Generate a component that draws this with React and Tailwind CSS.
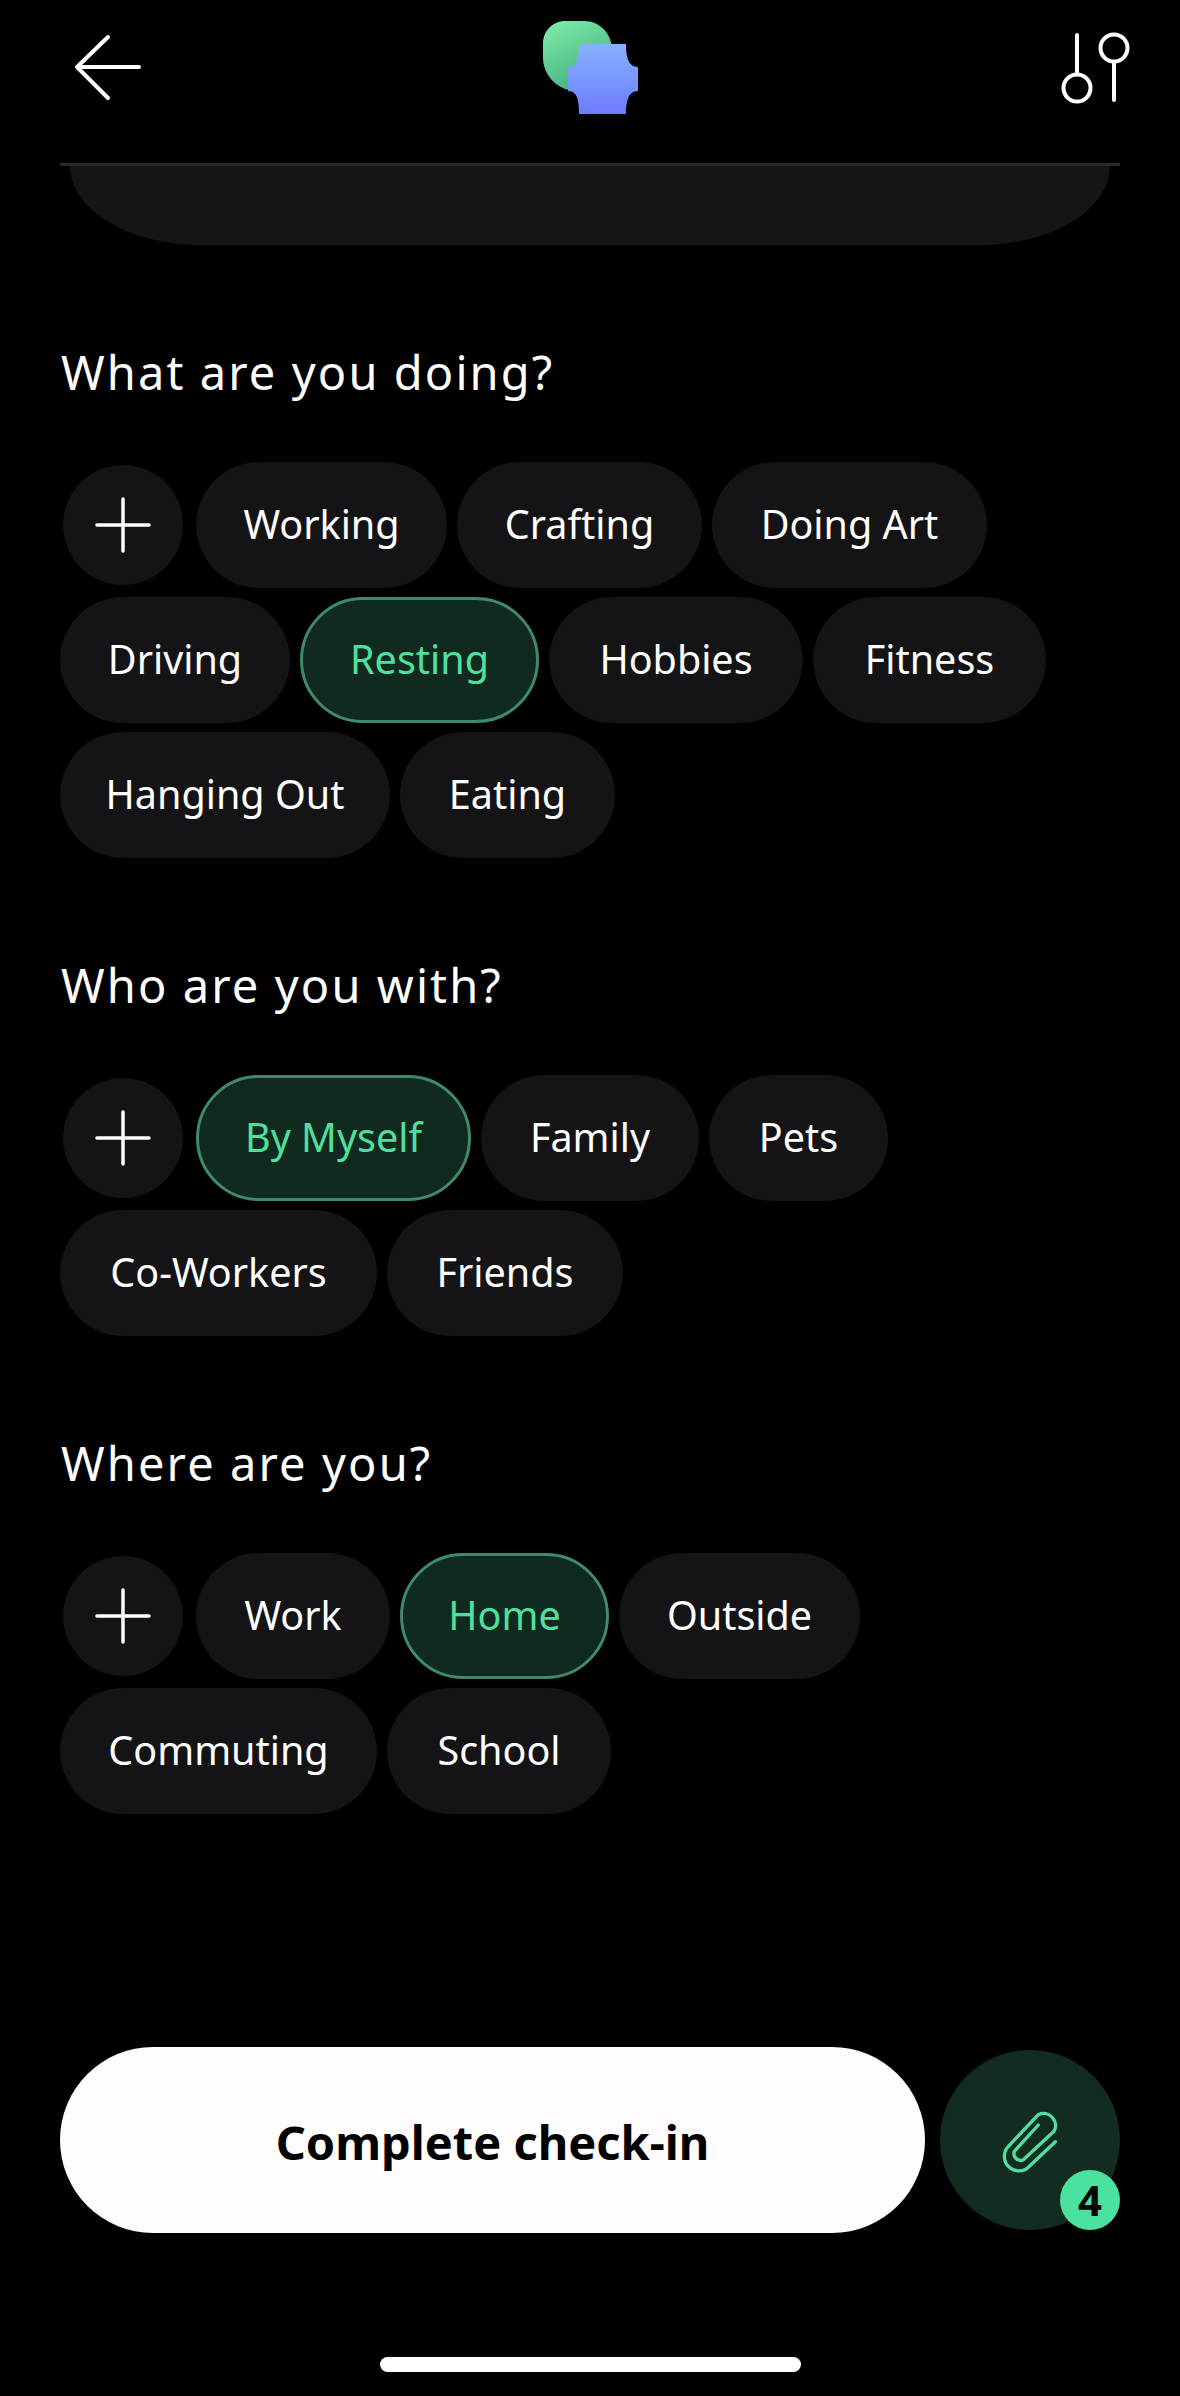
import React from "react";

const groups = [
  {
    title: "What are you doing?",
    rows: [
      [["Working", "w-[251px]"], ["Crafting", "w-[245px]"], ["Doing Art", "w-[275px]"]],
      [["Driving", "w-[230px]"], ["Resting", "w-[239px]", true], ["Hobbies", "w-[254px]"], ["Fitness", "w-[233px]"]],
      [["Hanging Out", "w-[330px]"], ["Eating", "w-[215px]"]],
    ],
  },
  {
    title: "Who are you with?",
    rows: [
      [["By Myself", "w-[275px]", true], ["Family", "w-[218px]"], ["Pets", "w-[179px]"]],
      [["Co-Workers", "w-[317px]"], ["Friends", "w-[236px]"]],
    ],
  },
  {
    title: "Where are you?",
    rows: [
      [["Work", "w-[194px]"], ["Home", "w-[209px]", true], ["Outside", "w-[241px]"]],
      [["Commuting", "w-[317px]"], ["School", "w-[224px]"]],
    ],
  },
];

function Pill({ label, width, on }) {
  return (
    <div
      className={`${width} h-[126px] rounded-full flex items-center justify-center text-[39.5px] leading-none whitespace-nowrap ${
        on ? "bg-[#112a1f] border-[3px] border-[#3f8a68] text-[#4fe0a0]" : "bg-[#141416] text-white"
      }`}
    >
      {label}
    </div>
  );
}

function Plus() {
  return (
    <div className="w-[120px] h-[120px] m-[3px] rounded-full bg-[#141416] flex items-center justify-center">
      <svg width="56" height="56" viewBox="0 0 56 56" fill="none" stroke="#fff" strokeWidth="3.5" strokeLinecap="round">
        <path d="M28 2V54M2 28H54" />
      </svg>
    </div>
  );
}

export default function App() {
  return (
    <div className="w-[1180px] h-[2396px] bg-black overflow-hidden" style={{ fontFamily: '"Noto Sans", sans-serif' }}>
      <header className="h-[163px] px-[50px] pt-[18px] flex justify-between items-start">
        <svg width="100" height="100" viewBox="50 18 100 100" fill="none" stroke="#fff" strokeWidth="4" strokeLinecap="round" strokeLinejoin="round">
          <path d="M108 37L77 67L108 98M77 67H139" />
        </svg>
        <svg width="100" height="100" viewBox="540 18 100 100">
          <defs>
            <linearGradient id="gr" x1="0.2" y1="0" x2="0.7" y2="1">
              <stop offset="0" stopColor="#7ce9a8" />
              <stop offset="1" stopColor="#3fae7c" />
            </linearGradient>
            <linearGradient id="bl" x1="0" y1="0" x2="0" y2="1">
              <stop offset="0" stopColor="#86b1ff" />
              <stop offset="1" stopColor="#6e7cff" />
            </linearGradient>
          </defs>
          <path d="M565 21H584C600 21 612 34 612 50V90H570C555 88 543 73 543 58V43C543 31 553 21 565 21Z" fill="url(#gr)" />
          <path d="M579 44H626C626 56 628 67 638 67V91C628 91 626 102 626 114H579C579 102 578 91 568 91V67C578 67 579 56 579 44Z" fill="url(#bl)" />
        </svg>
        <svg width="100" height="100" viewBox="1030 18 100 100" fill="none" stroke="#fff" strokeWidth="4" strokeLinecap="round">
          <path d="M1077 35V73M1114 62V100" />
          <circle cx="1077" cy="88" r="13.5" />
          <circle cx="1114" cy="48" r="13.5" />
        </svg>
      </header>

      <div className="mx-[60px] h-[3px] bg-[#2a2a2c]" />
      <div className="mx-[70px] h-[79px] bg-[#151517] rounded-b-[130px_79px]" />

      <main className="mx-[60px] mt-[97px] flex flex-col gap-[97px]">
        {groups.map((g) => (
          <section key={g.title}>
            <h2 className="h-[60px] mb-[60px] ml-px flex items-center text-[47px] leading-none tracking-[2.1px] text-white">{g.title}</h2>
            <div className="flex flex-col gap-[9px]">
              {g.rows.map((row, ri) => (
                <div key={ri} className="flex gap-[10px]">
                  {ri === 0 && <Plus />}
                  {row.map(([label, w, on]) => (
                    <Pill key={label} label={label} width={w} on={on} />
                  ))}
                </div>
              ))}
            </div>
          </section>
        ))}
      </main>

      <div className="mx-[60px] mt-[233px] flex items-center gap-[15px]">
        <button className="w-[865px] h-[186px] pt-[4px] rounded-full bg-[#fefcfd] text-black text-[47px] font-bold">Complete check-in</button>
        <div className="relative w-[180px] h-[180px] rounded-full bg-[#122c20] flex items-center justify-center">
          <svg width="60" height="65" viewBox="660 265 180 195" fill="none" stroke="#4fe0a0" strokeWidth="10" strokeLinecap="round" strokeLinejoin="round">
            <path d="M826 366L748 440A42 42 0 0 1 685 380L775 285A36 36 0 0 1 822 335L730 420A20 20 0 0 1 703 395L775 316" />
          </svg>
          <div className="absolute right-0 bottom-0 w-[60px] h-[60px] rounded-full bg-[#4be29f] text-black flex items-center justify-center text-[42px] font-bold leading-none">4</div>
        </div>
      </div>

      <div className="mx-auto mt-[124px] w-[421px] h-[15px] rounded-full bg-white" />
    </div>
  );
}
